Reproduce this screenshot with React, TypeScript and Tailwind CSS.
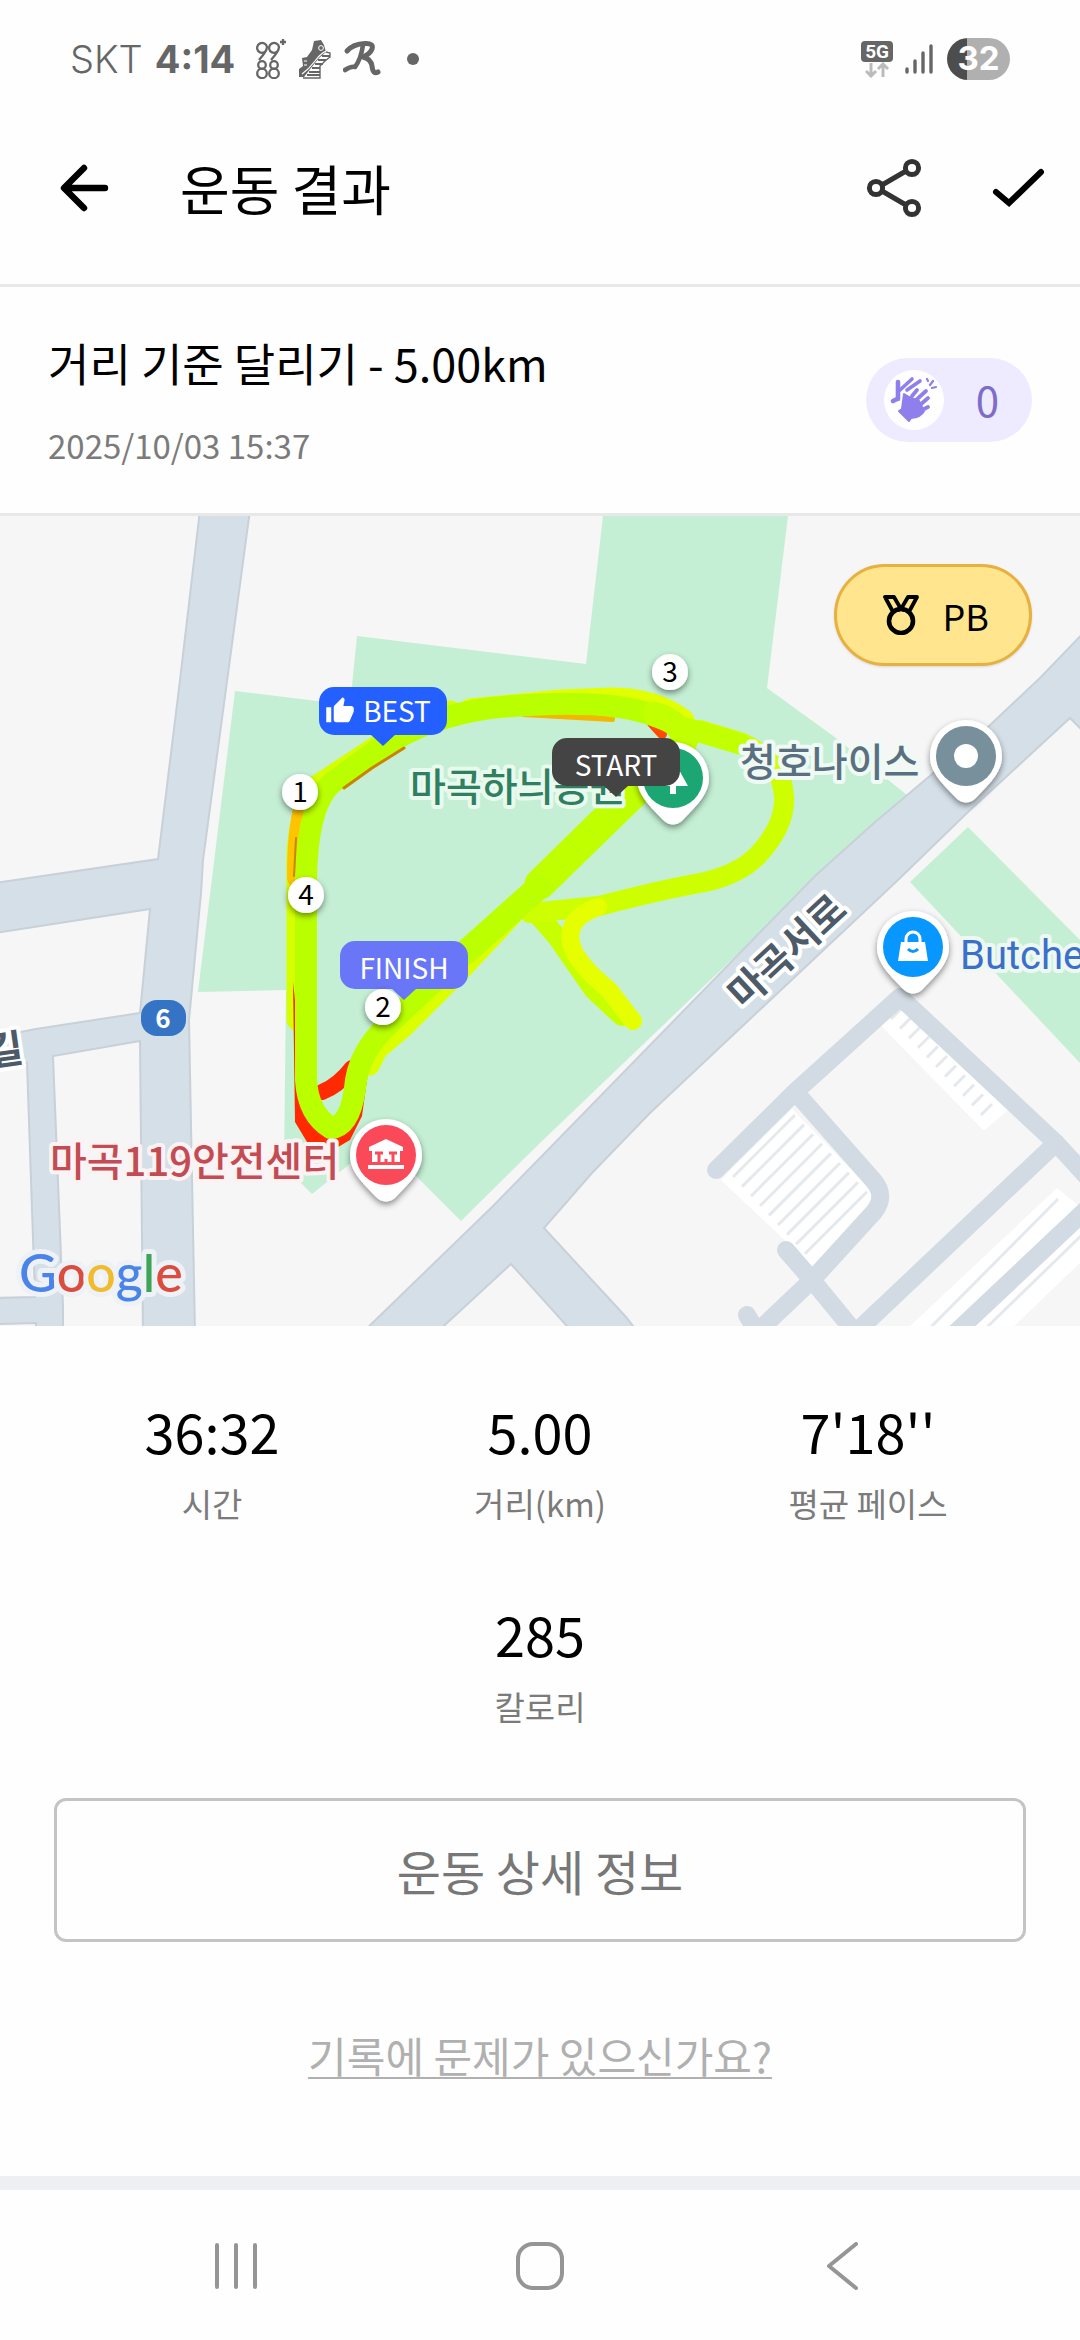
import type { ReactNode } from "react";
import { MdThumbUp } from "react-icons/md";

interface Stat {
  value: string;
  label: string;
}

const stats: Stat[] = [
  { value: "36:32", label: "시간" },
  { value: "5.00", label: "거리(km)" },
  { value: "7'18''", label: "평균 페이스" },
  { value: "285", label: "칼로리" },
];

const kmMarks = [
  { n: 1, x: 300, y: 792 },
  { n: 2, x: 383, y: 1007 },
  { n: 3, x: 670, y: 672 },
  { n: 4, x: 306, y: 895 },
];

const StatusBar = () => (
  <div className="flex h-[118px] items-center justify-between pl-[70px] pr-[70px] text-[#666]">
    <div className="flex items-center">
      <span className="font-[Inter] text-[38px] font-light">SKT</span>
      <span className="ml-3 font-[Inter] text-[38px] font-bold">4:14</span>
      <svg className="ml-5 h-10 w-8" viewBox="0 0 32 40" fill="none" stroke="currentColor" strokeWidth="2.3">
        <path d="M11 12A5 5 0 1 1 12 8Q12 12 4 21" />
        <path d="M23 12A5 5 0 1 1 24 8Q24 12 16 21" />
        <path d="M28 0v6M25 3h6" />
        <circle cx="7" cy="26" r="3.8" />
        <circle cx="19" cy="26" r="3.8" />
        <circle cx="7" cy="34.4" r="4.8" />
        <circle cx="19" cy="34.4" r="4.8" />
      </svg>
      <svg className="ml-3 h-10 w-8" viewBox="0 0 32 40" fill="currentColor">
        <path d="M15 2L22 1L25 6L27 13L20 19L12 29L5 38L0 38V30L4 27L3 19L8 18L13 11Z" />
        <path d="M27 13L31 14V18L26 22L21 27V39H4" fill="none" stroke="currentColor" strokeWidth="1.4" />
        <path d="M23 17H31M19 21H27M16 25H24M13 29H21M10 33H21M8 36H21" stroke="currentColor" strokeWidth="1.8" />
        <path d="M27 12Q21 15 16 22Q10 30 3 35M5 22h3M5 26h3" fill="none" stroke="#fff" strokeWidth="1.2" />
        <circle cx="22" cy="9" r="2.4" fill="none" stroke="#fff" strokeWidth="1" />
      </svg>
      <svg className="ml-3 h-10 w-10" viewBox="0 0 40 40" fill="none" stroke="currentColor" strokeLinecap="round" strokeLinejoin="round">
        <path d="M4 12Q10 5 22 4.500Q31 4 29 10Q27 15 20 18Q28 20 29 27Q30 36 35 33" strokeWidth="5" />
        <path d="M20 6Q18 20 12 28Q8 27 2 31" strokeWidth="4.6" />
      </svg>
      <span className="ml-6 size-3 rounded-full bg-[#666]" />
    </div>
    <div className="flex items-center">
      <div className="flex flex-col items-center">
        <span className="rounded bg-[#666] px-1 font-[Roboto] text-[19px] leading-[21px] font-bold text-white">5G</span>
        <svg className="h-4 w-6" viewBox="0 0 24 16" fill="none" stroke="#bbb" strokeWidth="3">
          <path d="M6 1v12M1 9l5 5 5-5M18 15V3M13 7l5-5 5 5" />
        </svg>
      </div>
      <svg className="ml-3 h-[30px] w-7" viewBox="0 0 28 30" stroke="currentColor" strokeWidth="3.4" strokeLinecap="round">
        <path d="M2 25v3M10 17v11M18 9v19M26 2v26" />
      </svg>
      <span className="ml-[14px] flex h-[42px] w-[63px] items-center justify-center rounded-full bg-linear-to-r from-[#4d4d4d] from-32% to-[#b0b0b0] to-32% font-[Inter] text-[33px] font-bold text-white">
        32
      </span>
    </div>
  </div>
);

const ClapIcon = () => (
  <svg className="size-[60px]" viewBox="0 0 60 60" fill="none" stroke="#8f7fec" strokeLinecap="round" strokeLinejoin="round">
    <circle cx="30" cy="30" r="30" fill="#fff" stroke="none" />
    <path d="M14 12v17M9 31l4-2" strokeWidth="4.6" />
    <path d="M16 20l12-11M23 20l13-9" strokeWidth="3.6" />
    <path d="M20 24l-2 15-3 2 8 8 2 2 2-3q10-1 13-7l-5-10-10-4z" fill="#8f7fec" strokeWidth="2" />
    <path d="M28 26l5-6M31 31l11-10M36 35l8-7M38 40l6-3" strokeWidth="3.8" />
    <path d="M43 9l1 2M49 11l-3 4M52 17l-4 1" strokeWidth="2.2" />
  </svg>
);

const MedalIcon = () => (
  <svg className="h-10 w-9" viewBox="0 0 36 40" fill="none" stroke="#000" strokeLinecap="round" strokeLinejoin="round">
    <circle cx="18" cy="26" r="12" strokeWidth="4.6" />
    <path d="M2 2h9l7 12 7-12h9l-7 13M2 2l7 13M18 14l-3 1M18 14l3 1" strokeWidth="3.8" />
  </svg>
);

interface PinProps {
  x: number;
  y: number;
  color: string;
  children: ReactNode;
}

const Pin = ({ x, y, color, children }: PinProps) => (
  <g transform={`translate(${x} ${y})`}>
    <path
      d="M0 -36A36 36 0 0 1 36 0C36 16 25 26 10 42Q0 51 -10 42C-25 26 -36 16 -36 0A36 36 0 0 1 0 -36Z"
      fill="#fff"
      filter="url(#shadow)"
    />
    <circle r="30" fill={color} />
    {children}
  </g>
);

interface FlagProps {
  x: number;
  y: number;
  color: string;
  label: string;
  icon?: ReactNode;
}

// x, y is the tip of the bubble
const Flag = ({ x, y, color, label, icon }: FlagProps) => (
  <g transform={`translate(${x} ${y})`}>
    <rect x="-64" y="-59" width="128" height="48" rx="15" fill={color} />
    <path d="M-13 -12H13L0 0Z" fill={color} />
    {icon}
    <text x={icon ? 14 : 0} y={icon ? -24 : -21} textAnchor="middle" fontSize="28" fill="#fff">
      {label}
    </text>
  </g>
);

const parkingWide = Array.from({ length: 9 }, (_, i) => i);
const parkingNarrow = Array.from({ length: 11 }, (_, i) => i);

const RouteMap = () => (
  <svg className="block w-full" viewBox="0 516 1080 810" role="img" aria-label="달리기 경로">
    <defs>
      <filter id="shadow" x="-30%" y="-30%" width="160%" height="160%">
        <feDropShadow dx="0" dy="3" stdDeviation="3" floodOpacity="0.45" />
      </filter>
    </defs>
    <rect y="516" width="1080" height="810" fill="#f6f6f6" />

    {/* parks */}
    <g fill="#c4efd4">
      <path d="M603 516H788L767 688L836 738L907 795L815 880L540 1143L461 1221L380 1140L312 1194L284 1166L286 990L198 992L235 691L350 705L357 636L586 664Z" />
      <path d="M968 827L910 882L1080 1063V940Z" />
    </g>

    {/* roads */}
    <g fill="#d5dfe7" stroke="#c8d0d8" strokeWidth="2">
      <path d="M200 510L180 680L158 859L-5 883V933L150 909L140 1013L36 1029L-5 1037V1068L27 1063L35 1297L-5 1298V1324L36 1323V1335H63V1307L53 1056L140 1041L143 1335H195L189 1020L201 893L203 860L250 510Z" />
      <path d="M1090 626L1041 677L988 727L874 823L815 876L540 1158L492 1207L360 1335H434L511 1264L575 1335H640L626 1317L544 1228L592 1173L650 1113L898 880L967 813L1070 718L1090 738Z" />
    </g>

    {/* parking lots */}
    <g fill="#fff">
      <path d="M792 1109L871 1190V1202L813 1267L721 1180Z" />
      <path d="M902 1004L1005 1110L984 1128L882 1024Z" stroke="#fff" strokeWidth="4" strokeLinejoin="round" />
      <path d="M1057 1188L1078 1205L946 1330H906Z" />
      <path d="M1085 1220V1258L1010 1330H966Z" />
    </g>
    <g stroke="#e6e9ec" strokeWidth="3">
      {parkingWide.map((i) => (
        <path key={i} d="M733 1177L795 1115" transform={`translate(${i * 9} ${i * 9.6})`} />
      ))}
      {parkingNarrow.map((i) => (
        <path key={i} d="M891 1019L902 1008" transform={`translate(${i * 9} ${i * 9.6})`} />
      ))}
      <path d="M928 1330L1058 1199M984 1330L1085 1232" />
    </g>
    <g fill="none" stroke="#d2dbe4" strokeWidth="18" strokeLinecap="round" strokeLinejoin="round">
      <path d="M716 1170L795 1092L900 997L1056 1143L1090 1180" />
      <path d="M798 1095L873 1180Q887 1196 874 1212L812 1280L753 1336" />
      <path d="M786 1250L812 1280L858 1336M747 1315L758 1334M852 1336L1056 1143M952 1336L1090 1206" />
    </g>

    {/* track, coloured by pace */}
    <g fill="none" strokeLinecap="round" strokeLinejoin="round">
      <path d="M322 1092Q338 1086 352 1068" stroke="#ff2a00" strokeWidth="16" />
      <path d="M297 1020V860Q297 818 316 786L380 744L450 711" stroke="#d6ff00" strokeWidth="21" />
      <path d="M304 806Q297 830 297 878" stroke="#ffc400" strokeWidth="20" />
      <path d="M293 982L295 1122L307 1142L333 1150L350 1140L362 1116L371 1050H358L352 1106L331 1132L310 1116L304 1080Z" fill="#ff2a00" />
      <path d="M370 1066L378 1050L404 1028L462 970L516 912" stroke="#dcff00" strokeWidth="19" />
      <path d="M470 709L560 700L612 698Q655 698 684 720" stroke="#e2ff00" strokeWidth="21" />
      <path d="M524 714L612 719" stroke="#f2b800" strokeWidth="6" />
      <path d="M652 723L662 734" stroke="#ff4a00" strokeWidth="10" />
      <path d="M532 908L558 938L594 990L622 1016" stroke="#c8ff00" strokeWidth="20" />
      <path
        d="M530 913L599 906Q660 890 705 882Q740 874 758 855Q786 825 784 796Q782 760 740 742L700 730"
        stroke="#ceff00"
        strokeWidth="20"
      />
      <path d="M598 907Q566 918 571 943Q575 962 609 990L633 1021" stroke="#e6ff00" strokeWidth="18" />
      <path
        d="M688 738L682 752L632 796L540 886L463 954L389 1024Q358 1052 355 1088Q350 1126 331 1128Q308 1114 306 1080V893Q305 800 336 780L380 748Q430 716 490 708Q600 697 650 714Q690 728 688 738"
        stroke="#baff00"
        strokeWidth="22"
      />
      <path d="M676 752L626 800L540 884" stroke="#c0ff00" strokeWidth="31" />
      <path d="M540 886L466 952" stroke="#bcff00" strokeWidth="25" />
      <path d="M654 714Q680 720 685 742" stroke="#c2ff00" strokeWidth="24" />
      <path d="M686 728L740 744" stroke="#c2ff00" strokeWidth="21" />
      <path d="M344 788L372 768L404 748" stroke="#c98400" strokeWidth="3" />
      <path d="M296 838L294 876" stroke="#c98400" strokeWidth="2" />
    </g>

    {/* place names */}
    <g fontSize="39" fontWeight="500" strokeWidth="8" strokeLinejoin="round" paintOrder="stroke">
      <text x="410" y="801" fill="#2f7f60" stroke="#e8f9ee">마곡하늬공원</text>
      <text x="740" y="776" fill="#5a7081" stroke="#f0faf4">청호나이스</text>
      <text x="50" y="1176" fontSize="40" fill="#c34b54" stroke="#fbf3f3">마곡119안전센터</text>
      <text x="960" y="969" className="font-[Roboto]" fontSize="40" fontWeight="400" fill="#3b6fc9" stroke="#edf8f3">Butche</text>
      <text x="0" y="14" textAnchor="middle" fontWeight="700" fill="#4d5b69" stroke="#fff" transform="translate(787 951) rotate(-43)">
        마곡서로
      </text>
      <text x="0" y="14" textAnchor="middle" fontWeight="700" fill="#4d5b69" stroke="#fff" transform="translate(5 1050) rotate(-8)">
        길
      </text>
    </g>

    <rect x="141" y="1000" width="45" height="36" rx="16" fill="#3574c4" />
    <text x="163" y="1028" textAnchor="middle" fontSize="26" fontWeight="700" fill="#fff">6</text>

    <Pin x={673} y={778} color="#1ba673">
      <path d="M0 -19L15 8H3V16H-3V8H-15Z" fill="#fff" />
    </Pin>
    <Pin x={966} y={756} color="#78909c">
      <circle r="12" fill="#fff" />
    </Pin>
    <Pin x={913} y={947} color="#0896ff">
      <path d="M-12 -5H12L15 14H-15Z" fill="#fff" />
      <path d="M-7 -4V-8A7 7 0 0 1 7 -8V-4" fill="none" stroke="#fff" strokeWidth="3" />
      <path d="M-5 2Q0 7 5 2" fill="none" stroke="#0896ff" strokeWidth="3" />
    </Pin>
    <Pin x={386} y={1155} color="#fa4a5a">
      <path d="M-17 -8L0 -16L17 -8V-4H14V7H-14V-4H-17Z" fill="#fff" />
      <path d="M-18 10H18V14H-18Z" fill="#fff" />
      <path d="M-7 7V-1M-11 -2H-3M7 7V-1M11 -2H3M0 8V4" stroke="#fa4a5a" strokeWidth="3" />
    </Pin>

    <Flag
      x={383}
      y={746}
      color="#2460ff"
      label="BEST"
      icon={<MdThumbUp x={-58} y={-50} size={30} color="#fff" />}
    />
    <Flag x={616} y={797} color="#444" label="START" />
    <Flag x={404} y={1000} color="#6876f7" label="FINISH" />

    {kmMarks.map(({ n, x, y }) => (
      <g key={n}>
        <circle cx={x} cy={y} r="18" fill="#fff" filter="url(#shadow)" />
        <text x={x} y={y + 10} textAnchor="middle" fontSize="28">
          {n}
        </text>
      </g>
    ))}

    <text
      x="19"
      y="1292"
      className="font-[Lato]"
      fontSize="52"
      fontWeight="500"
      stroke="#eef1f5"
      strokeWidth="10"
      strokeLinejoin="round"
      paintOrder="stroke"
    >
      <tspan fill="#4a84e8">G</tspan>
      <tspan fill="#d94c3f">o</tspan>
      <tspan fill="#f0bb2c">o</tspan>
      <tspan fill="#4a84e8">g</tspan>
      <tspan fill="#3ea458">l</tspan>
      <tspan fill="#d94c3f">e</tspan>
    </text>
  </svg>
);

export default function App() {
  return (
    <div className="flex min-h-screen flex-col bg-[#fefefe] font-['Noto_Sans_CJK_KR',sans-serif] text-black">
      <StatusBar />

      <header className="flex items-center border-b-3 border-[#e8e8e8] pt-10 pr-[33px] pb-[66px] pl-[55px]">
        <button aria-label="뒤로">
          <svg className="size-[60px]" viewBox="0 0 60 60" fill="none" stroke="#000" strokeWidth="6.4" strokeLinecap="round" strokeLinejoin="round">
            <path d="M50 30H10M29 10L9 30L29 50" />
          </svg>
        </button>
        <h1 className="ml-[65px] flex-1 text-[54px] leading-[60px]">운동 결과</h1>
        <button aria-label="공유">
          <svg className="size-[60px]" viewBox="0 0 60 60" fill="none" stroke="#333" strokeWidth="5">
            <circle cx="12" cy="30" r="6.6" />
            <circle cx="48" cy="10" r="6.6" />
            <circle cx="48" cy="50" r="6.6" />
            <path d="M18 27L42 13M18 33L42 47" />
          </svg>
        </button>
        <button aria-label="확인" className="ml-[63px]">
          <svg className="size-[60px]" viewBox="0 0 60 60" fill="none" stroke="#000" strokeWidth="6" strokeLinecap="round">
            <path d="M9 34L22 45L54 14" />
          </svg>
        </button>
      </header>

      <section className="flex items-center justify-between border-b-3 border-[#e8e8e8] px-12 py-[43px]">
        <div className="flex flex-col gap-6">
          <h2 className="text-[45px] leading-[66px]">거리 기준 달리기 - 5.00km</h2>
          <p className="text-[33px] leading-[50px] text-[#7b7b7b]">2025/10/03 15:37</p>
        </div>
        <button className="flex h-[84px] items-center gap-8 rounded-full bg-[#eeeaff] pr-[33px] pl-[18px] text-[42px] text-[#7d6dc8]">
          <ClapIcon />
          <span className="pb-1">0</span>
        </button>
      </section>

      <div className="relative">
        <RouteMap />
        <button className="absolute top-12 right-12 flex h-[102px] items-center gap-6 rounded-full border-3 border-[#e8b03f] bg-[#ffe68e] pr-10 pl-[46px] text-[36px] shadow-sm">
          <MedalIcon />
          PB
        </button>
      </div>

      <dl className="flex flex-wrap justify-center gap-y-[67px] px-12 pt-[65px]">
        {stats.map(({ value, label }) => (
          <div key={label} className="flex w-1/3 flex-col-reverse gap-2 text-center">
            <dt className="text-[33px] leading-[48px] text-[#7b7b7b]">{label}</dt>
            <dd className="text-[54px] leading-[80px]">{value}</dd>
          </div>
        ))}
      </dl>

      <div className="flex flex-col items-center px-[54px] pt-[68px] pb-[90px]">
        <button className="h-[144px] w-full rounded-xl border-3 border-[#c4c4c4] text-[48px] text-[#777]">
          운동 상세 정보
        </button>
        <a href="#report" className="mt-[82px] text-[42px] leading-[62px] text-[#b0b0b0] underline decoration-2 underline-offset-4">
          기록에 문제가 있으신가요?
        </a>
      </div>

      <div className="h-[14px] bg-[#edeff3]" />

      <nav className="flex flex-1 items-start justify-between px-[212px] pt-[52px] pb-12">
        <button aria-label="최근 앱">
          <svg className="size-12" viewBox="0 0 48 48" stroke="#959595" strokeWidth="4" strokeLinecap="round">
            <path d="M5 3v42M24 3v42M43 3v42" />
          </svg>
        </button>
        <button aria-label="홈">
          <svg className="size-12" viewBox="0 0 48 48" fill="none" stroke="#959595" strokeWidth="4">
            <rect x="2" y="2" width="44" height="44" rx="15" />
          </svg>
        </button>
        <button aria-label="이전">
          <svg className="size-12" viewBox="0 0 48 48" fill="none" stroke="#959595" strokeWidth="4" strokeLinecap="round" strokeLinejoin="round">
            <path d="M36 2L9 24L36 46" />
          </svg>
        </button>
      </nav>
    </div>
  );
}
